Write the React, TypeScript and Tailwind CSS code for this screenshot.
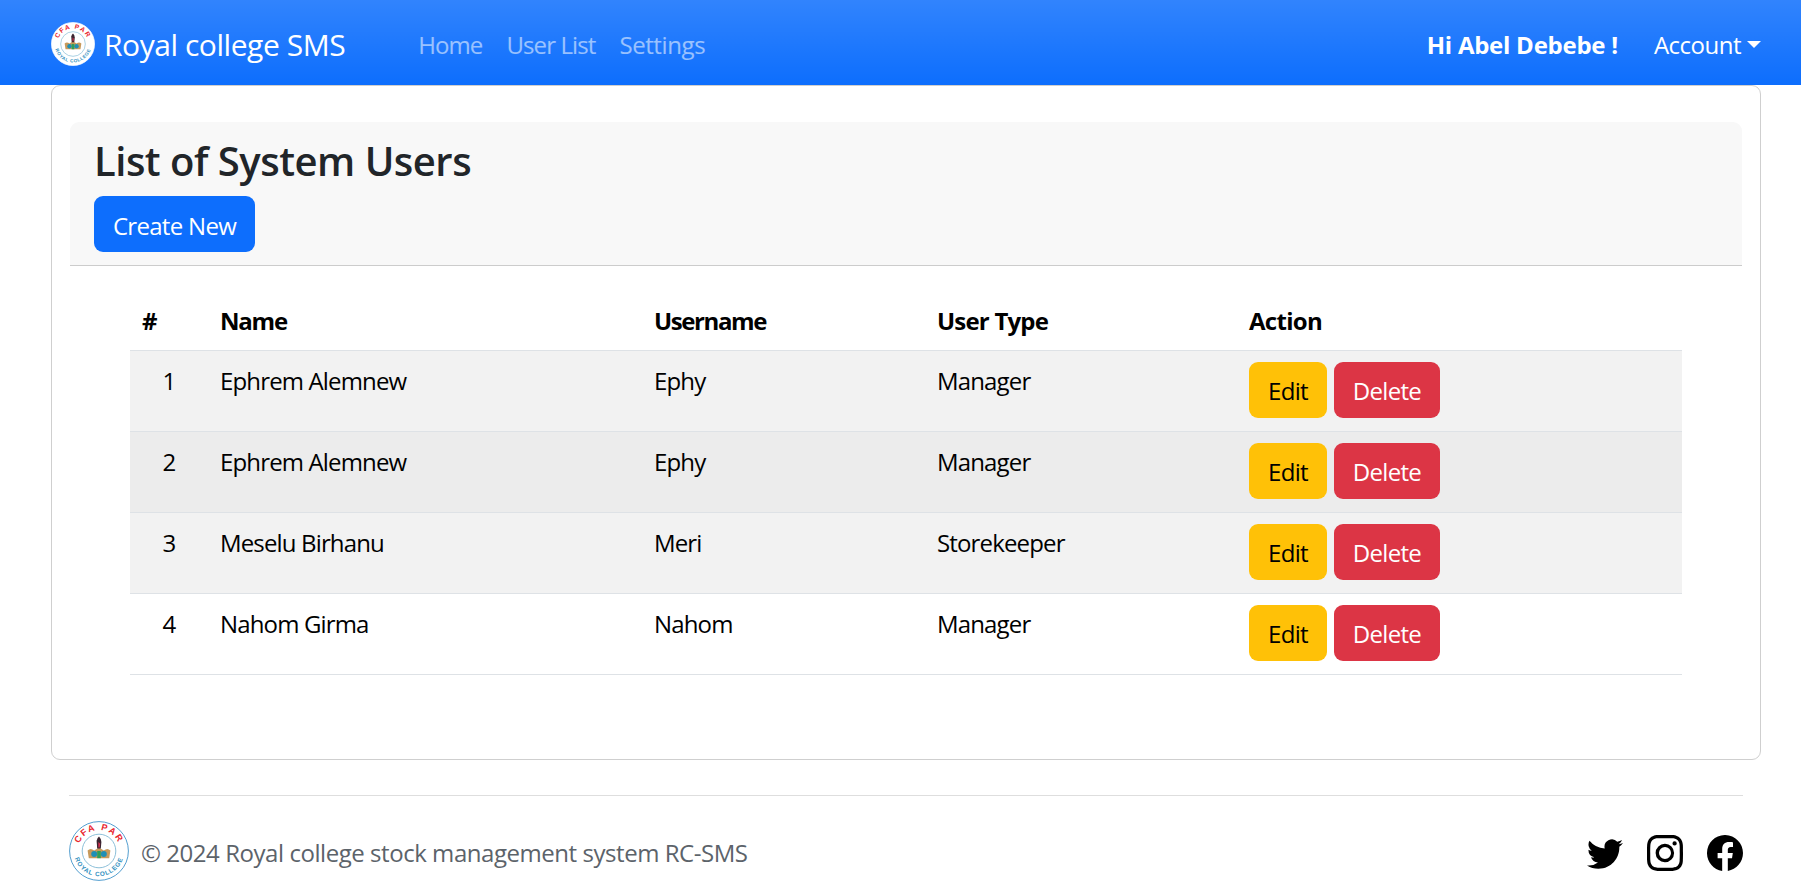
import { BsFacebook, BsInstagram, BsTwitter } from 'react-icons/bs'

const users = [
  { id: 1, name: 'Ephrem Alemnew', username: 'Ephy', type: 'Manager', bg: 'bg-[#f2f2f2]' },
  { id: 2, name: 'Ephrem Alemnew', username: 'Ephy', type: 'Manager', bg: 'bg-[#ececec]' },
  { id: 3, name: 'Meselu Birhanu', username: 'Meri', type: 'Storekeeper', bg: 'bg-[#f2f2f2]' },
  { id: 4, name: 'Nahom Girma', username: 'Nahom', type: 'Manager', bg: 'bg-white' },
]

function Logo({ size, ring }: { size: number; ring: string }) {
  return (
    <svg width={size} height={size} viewBox="0 0 100 100" className="shrink-0">
      <defs>
        <path id="logo-top" d="M 15 50 A 35 35 0 0 1 85 50" />
        <path id="logo-bottom" d="M 8 50 A 42 42 0 0 0 92 50" />
      </defs>
      <circle cx="50" cy="50" r="49" fill="#fff" stroke={ring} strokeWidth="1.5" />
      <circle cx="50" cy="50" r="28" fill="#fff" stroke="#7fb8d4" strokeWidth="1.5" />
      <text fontSize="15" fontWeight="700" fill="#e8242c" letterSpacing="3" fontFamily="'Liberation Sans', sans-serif">
        <textPath href="#logo-top" startOffset="50%" textAnchor="middle">CFA PAR</textPath>
      </text>
      <text fontSize="10.5" fontWeight="700" fill="#2f8fc0" letterSpacing="1.4" fontFamily="'Liberation Sans', sans-serif">
        <textPath href="#logo-bottom" startOffset="50%" textAnchor="middle">ROYAL COLLEGE</textPath>
      </text>
      <path d="M33 62 L31 49 Q36 44 42 49 L50 44 L58 49 Q64 44 69 49 L67 62 Z" fill="#c79a5b" />
      <path d="M47 46 L46 33 Q47 28 50 26 Q54 30 54 35 L53 46 Z" fill="#3a2430" />
      <path d="M49 44 L49 35 L52 38 L51 44 Z" fill="#d9304f" />
      <circle cx="42" cy="55" r="5" fill="#1f8fb5" />
      <circle cx="58" cy="55" r="5" fill="#1f8fb5" />
      <rect x="47" y="50" width="6" height="12" fill="#2e9e5b" />
    </svg>
  )
}

export default function App() {
  return (
    <div className="min-h-screen bg-white text-[24px] leading-[36px] text-[#212529] font-['Open_Sans','Liberation_Sans',sans-serif]">
      <nav className="h-[85px] pt-[3px] flex items-center pl-[51px] pr-[40px] bg-[#0d6efd] bg-gradient-to-b from-white/15 to-white/0">
        <Logo size={44} ring="#ffffff" />
        <a className="ml-[9px] text-[30px] leading-[45px] text-white tracking-[-0.45px]">Royal college SMS</a>
        <ul className="flex ml-[61px] pt-[1px] text-white/55 tracking-[-0.9px]">
          <li className="px-[12px]">Home</li>
          <li className="px-[12px]">User List</li>
          <li className="px-[12px] tracking-[-0.4px]">Settings</li>
        </ul>
        <div className="ml-auto pt-[1px] flex items-center text-white">
          <span className="font-bold tracking-[-0.25px]">Hi Abel Debebe !</span>
          <span className="ml-[36px] tracking-[-0.5px]">Account</span>
          <span className="ml-[6px] w-0 h-0 border-x-[7px] border-x-transparent border-t-[7px] border-t-white" />
        </div>
      </nav>

      <main className="mx-[51px] w-[1710px] h-[675px] border border-[#cfcfcf] rounded-[9px] px-[18px] pt-[36px]">
        <header className="h-[144px] bg-[#f8f8f8] border-b border-[#cccccc] rounded-t-[9px] px-[24px] pt-[15px]">
          <h2 className="text-[40px] leading-[48px] font-semibold text-[#212529] tracking-[-0.5px]">List of System Users</h2>
          <button className="mt-[11px] h-[56px] w-[161px] pt-[3px] rounded-[9px] bg-[#0d6efd] text-white tracking-[-0.7px]">Create New</button>
        </header>

        <table className="mt-[24px] ml-[60px] w-[1552px] table-fixed border-collapse text-black tracking-[-0.85px]">
          <thead>
            <tr className="h-[60px] border-b border-[#dee2e6] font-bold text-left">
              <th className="w-[78px] px-[12px] pt-[3px]">#</th>
              <th className="w-[434px] px-[12px] pt-[3px] tracking-[-1.2px]">Name</th>
              <th className="w-[283px] px-[12px] pt-[3px] tracking-[-1.4px]">Username</th>
              <th className="w-[312px] px-[12px] pt-[3px] tracking-[-0.8px]">User Type</th>
              <th className="px-[12px] pt-[3px] tracking-[-0.7px]">Action</th>
            </tr>
          </thead>
          <tbody>
            {users.map((u) => (
              <tr key={u.id} className={`h-[81px] border-b border-[#dee2e6] align-top ${u.bg}`}>
                <td className="px-[12px] py-[12px] text-center">{u.id}</td>
                <td className="px-[12px] py-[12px]">{u.name}</td>
                <td className="px-[12px] py-[12px]">{u.username}</td>
                <td className="px-[12px] py-[12px]">{u.type}</td>
                <td className="px-[12px] py-[11px] tracking-[-0.7px]">
                  <div className="flex gap-[7px]">
                    <button className="h-[56px] w-[78px] pt-[2px] rounded-[9px] bg-[#ffc107] text-black">Edit</button>
                    <button className="h-[56px] w-[106px] pt-[2px] rounded-[9px] bg-[#dc3545] text-white">Delete</button>
                  </div>
                </td>
              </tr>
            ))}
          </tbody>
        </table>
      </main>

      <footer className="mx-[69px] w-[1674px] mt-[35px] border-t border-[#dedede] h-[97px] pt-[14px] flex items-center">
        <Logo size={60} ring="#3f93c9" />
        <span className="ml-[12px] pt-[3px] text-[#5c636a] tracking-[-0.45px]">© 2024 Royal college stock management system RC-SMS</span>
        <div className="ml-auto pt-[3px] flex gap-[24px] text-black text-[36px]">
          <BsTwitter />
          <BsInstagram />
          <BsFacebook />
        </div>
      </footer>
    </div>
  )
}
